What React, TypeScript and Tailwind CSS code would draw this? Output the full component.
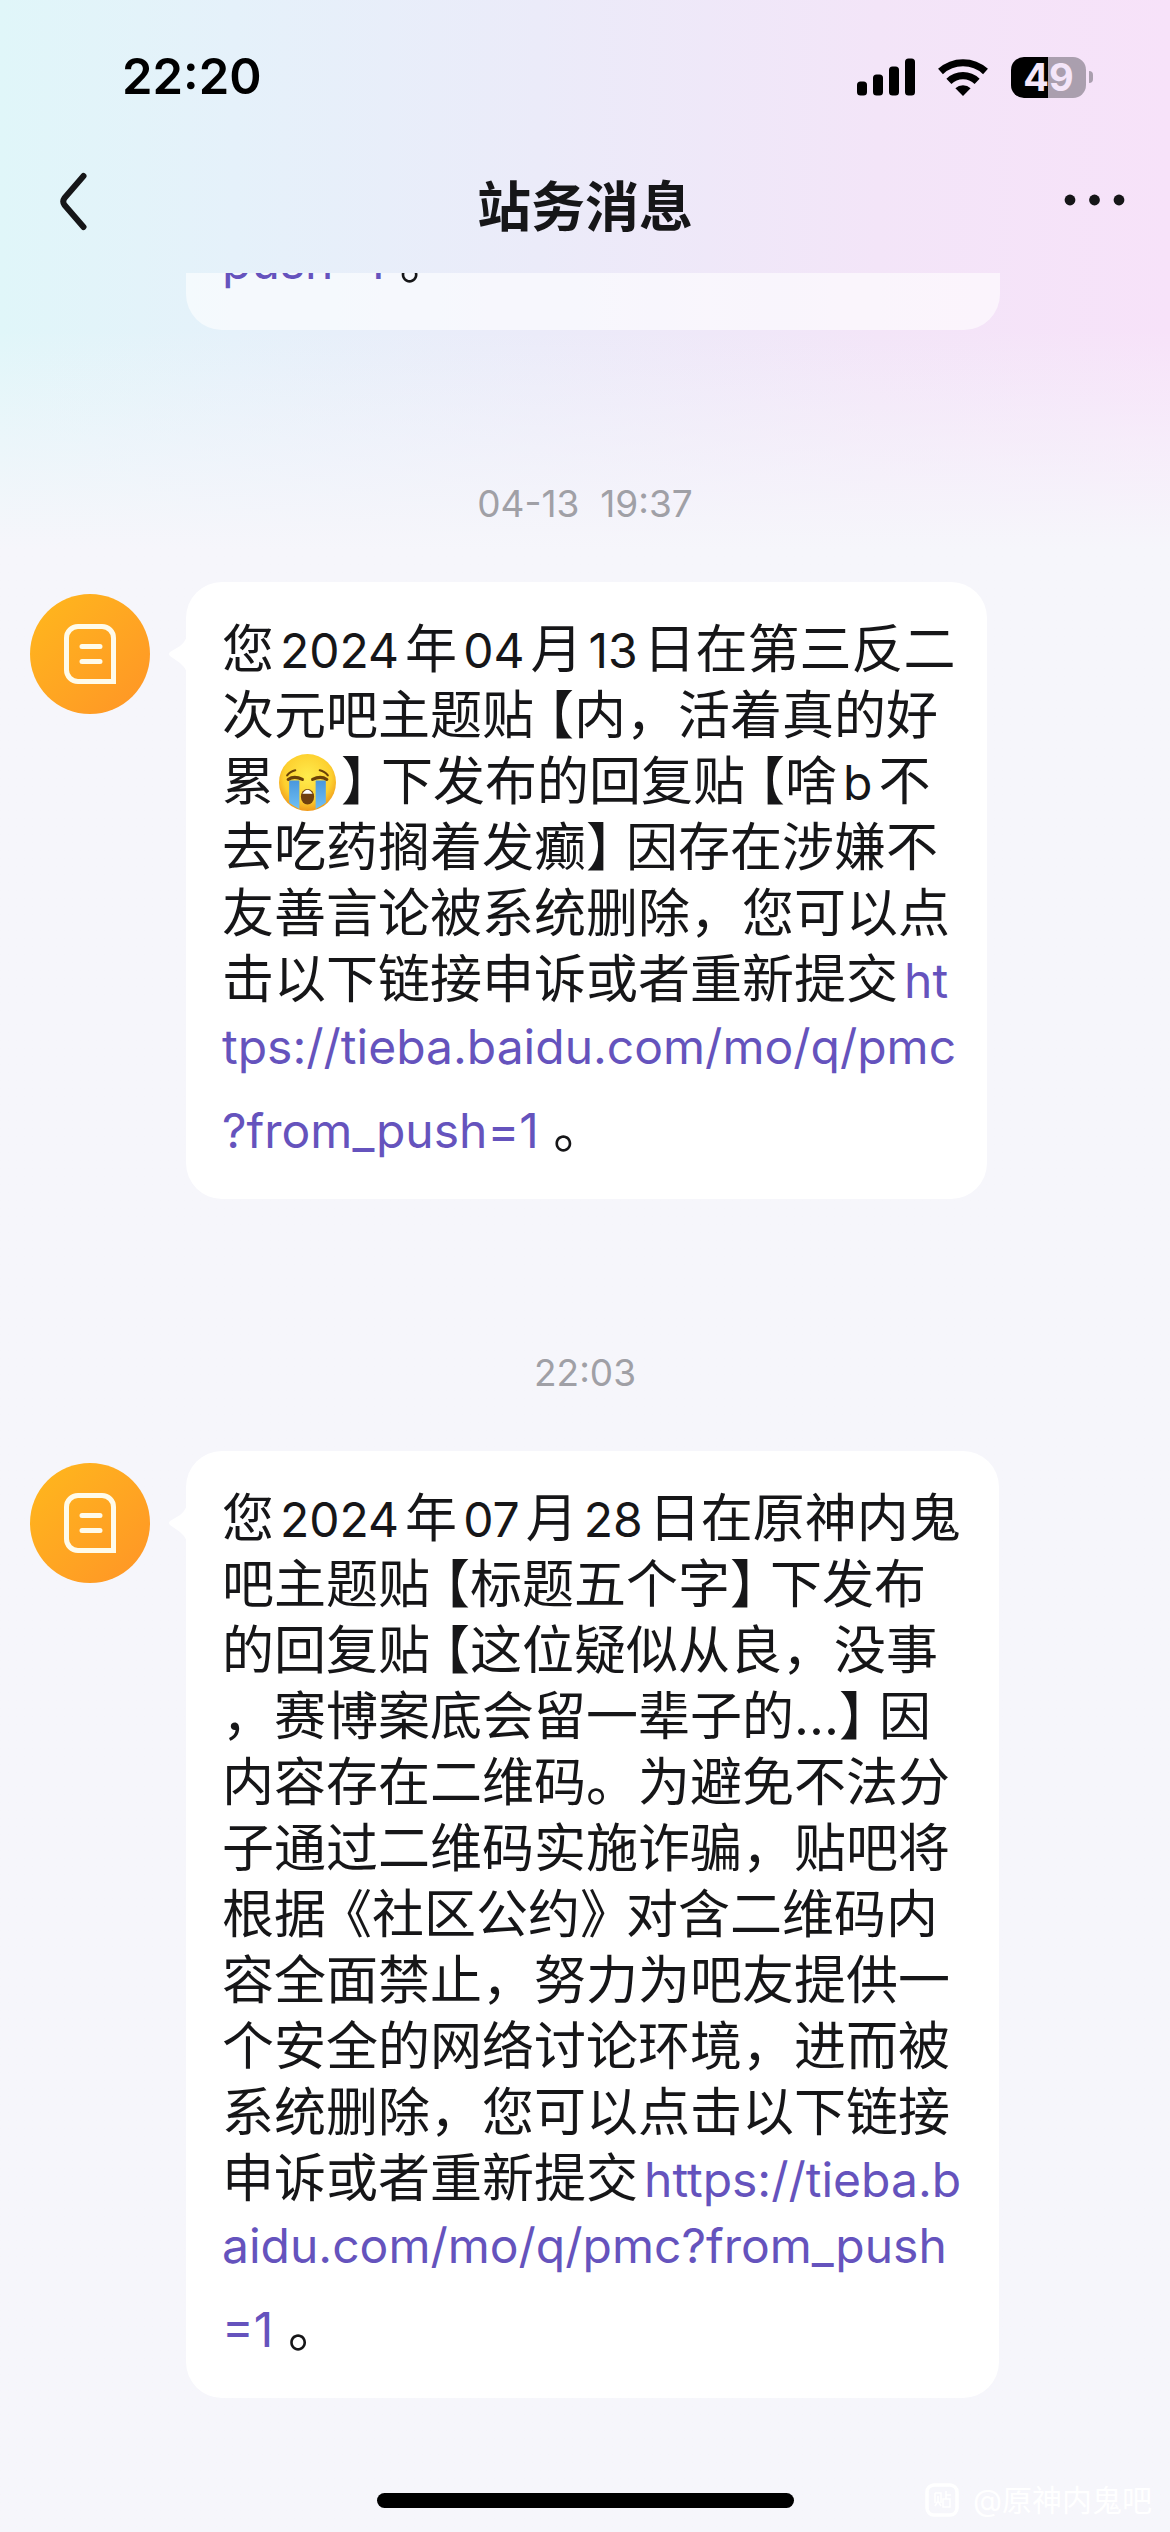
import React from 'react';

const SignalIcon = () => (
  <svg className="h-10 w-[58px]" viewBox="0 0 58 40" aria-hidden="true">
    <rect x="0" y="24.500" width="10" height="14" rx="3.500" />
    <rect x="16" y="17.500" width="10" height="21" rx="3.500" />
    <rect x="32" y="9.500" width="10" height="29" rx="3.500" />
    <rect x="48" y="1.500" width="10" height="37" rx="3.500" />
  </svg>
);

const WifiIcon = () => (
  <svg className="h-10 w-[50px]" viewBox="0 0 50 40" aria-hidden="true">
    <g fill="none" stroke="#000" strokeWidth="7.200">
      <path d="M2.500 14.500 A33.300 33.300 0 0 1 47.500 14.500" />
      <path d="M10.900 24.400 A20.300 20.300 0 0 1 39.100 24.400" />
    </g>
    <path d="M25 39 L17.400 31.200 A11 11 0 0 1 32.600 31.200 Z" />
  </svg>
);

const Battery = () => (
  <div className="flex items-center gap-[3px]">
    <div className="flex h-[41px] w-[75px] items-center justify-center rounded-[13px] bg-linear-to-r from-black from-50% to-[#aa9fae] to-50% text-[38px] leading-[41px] font-bold text-[#f4e6f9]">
      49
    </div>
    <div className="h-3 w-1 rounded-r-full bg-[#aa9fae]" />
  </div>
);

const Avatar = () => (
  <div className="mt-3 flex size-[120px] shrink-0 items-center justify-center rounded-full bg-linear-to-br from-[#ffb81c] to-[#ff9426]">
    <svg className="h-[60px] w-[52px]" viewBox="0 0 52 60" fill="none" stroke="#fffbea" aria-hidden="true">
      <path strokeWidth="5" d="M49.500 57.500 H14 A11.500 11.500 0 0 1 2.500 46 V14 A11.500 11.500 0 0 1 14 2.500 H38 A11.500 11.500 0 0 1 49.500 14 Z" />
      <path strokeWidth="5" strokeLinecap="round" d="M18 22.500 H36 M18 37.500 H36" />
    </svg>
  </div>
);

const CryingFace = () => (
  <svg className="mx-[5px] inline-block size-[57px] align-[-11px]" viewBox="0 0 56 56" role="img" aria-label="😭">
    <defs>
      <radialGradient id="face" cx="0.5" cy="0.4" r="0.6">
        <stop offset="0" stopColor="#ffec4d" />
        <stop offset="0.7" stopColor="#fdd02f" />
        <stop offset="1" stopColor="#f09a1c" />
      </radialGradient>
      <linearGradient id="tears" x1="0" y1="0" x2="0" y2="1">
        <stop offset="0" stopColor="#4a97dc" />
        <stop offset="1" stopColor="#6fc0f5" />
      </linearGradient>
    </defs>
    <circle cx="28" cy="28" r="28" fill="url(#face)" />
    <path d="M10 26 H20 V54 Q14 51 10 48 Z M36 26 H46 V48 Q42 51 36 54 Z" fill="url(#tears)" />
    <ellipse cx="28" cy="42" rx="6.500" ry="7.500" fill="#70400f" />
    <path d="M23 39 Q28 31 33 39 Z" fill="#fff" />
    <g fill="none" stroke="#6b4108" strokeLinecap="round">
      <path strokeWidth="3" d="M9 25 Q15 21 23 25 M33 25 Q41 21 47 25" />
      <path strokeWidth="2" d="M8 21 Q11 17 16 16 M40 16 Q45 17 48 21" />
    </g>
  </svg>
);

const Timestamp = ({ children }: { children: React.ReactNode }) => (
  <time className="block text-center text-[37px] leading-[48px] whitespace-pre text-[#a0a0a6]">{children}</time>
);

const Link = ({ children }: { children: React.ReactNode }) => (
  <a href="https://tieba.baidu.com/mo/q/pmc?from_push=1" className="ml-[6px] text-[48px] leading-none text-[#6553bd]">
    {children}
  </a>
);

// digits and latin letters inside the Chinese text
const Latin = ({ children }: { children: React.ReactNode }) => (
  <span className="mx-[6px] text-[48px] leading-none">{children}</span>
);

// brackets use their half-width forms
const Open = ({ gap = 'ml-[14px]', children }: { gap?: string; children: React.ReactNode }) => (
  <span className={`[font-feature-settings:'halt'] ${gap}`}>{children}</span>
);

const Close = ({ gap = 'mr-[14px]', children }: { gap?: string; children: React.ReactNode }) => (
  <span className={`[font-feature-settings:'halt'] ${gap}`}>{children}</span>
);

const FullStop = () => <span className="leading-[102px]"> 。</span>;

const Message = ({ width, children }: { width: string; children: React.ReactNode }) => (
  <div className="flex items-start gap-9 px-[30px]">
    <Avatar />
    <div className={`relative rounded-[36px] bg-white ${width}`}>
      <svg className="absolute top-[54px] -left-[18px] h-9 w-[19px]" viewBox="0 0 19 36" aria-hidden="true">
        <path d="M19 0 Q17 6 12 10 L2 16 Q0 18 2 20 L12 27 Q17 31 19 36 Z" fill="#fff" />
      </svg>
      <p className="pt-[35px] pb-[18px] pl-9 text-[52px] leading-[66px] whitespace-nowrap text-[#161618]">{children}</p>
    </div>
  </div>
);

const App = () => {
  return (
    <div className="flex min-h-screen flex-col bg-[#f6f6fb] font-['Inter','Noto_Sans_CJK_SC',sans-serif]">
      <div className="flex grow flex-col bg-[linear-gradient(to_right,#e0f6f9,#e5f1fa_20%,#ebebf9_46%,#f3e5f8_75%,#f7e2f9)]">
        <div className="flex grow flex-col bg-linear-to-b from-[#f6f6fb]/0 from-[330px] to-[#f6f6fb] to-[550px]">
          <header className="h-[273px]">
            <div className="flex items-center justify-between pt-[53px] pr-[77px] pl-[122px]">
              <span className="text-[49px] leading-[48px] font-semibold">22:20</span>
              <div className="flex items-center gap-[23px]">
                <SignalIcon />
                <WifiIcon />
                <Battery />
              </div>
            </div>
            <div className="flex items-center justify-between px-[45px] pt-[57px]">
              <button type="button" aria-label="返回" className="w-[61px]">
                <svg className="ml-[11px] h-[60px] w-[34px]" viewBox="0 0 34 60" fill="none" stroke="#161618" strokeWidth="6" strokeLinecap="round" strokeLinejoin="round" aria-hidden="true">
                  <path d="M27.500 5 L8.500 27 Q6 30.500 8.500 34 L27.500 56" />
                </svg>
              </button>
              <h1 className="pt-[14px] text-[54px] leading-[72px] font-semibold text-[#161618]">站务消息</h1>
              <button type="button" aria-label="更多">
                <svg className="h-[60px] w-[61px]" viewBox="0 0 61 60" fill="#161618" aria-hidden="true">
                  <circle cx="6" cy="29" r="5.400" />
                  <circle cx="30.500" cy="29" r="5.400" />
                  <circle cx="55" cy="29" r="5.400" />
                </svg>
              </button>
            </div>
          </header>

          <main className="grow">
            {/* tail of the previous message, scrolled under the header */}
            <div className="ml-[186px] flex h-[57px] w-[814px] flex-col justify-end overflow-hidden rounded-b-[36px] bg-white/60">
              <p className="shrink-0 pb-[18px] pl-[30px] text-[52px] leading-[66px] text-[#161618]">
                <Link>push=1</Link>
                <FullStop />
              </p>
            </div>

            <div className="pt-[150px] pb-[54px]">
              <Timestamp>{'04-13  19:37'}</Timestamp>
            </div>
            <Message width="w-[801px]">
              您<Latin>2024</Latin>年<Latin>04</Latin>月<Latin>13</Latin>日在第三反二<br />
              次元吧主题贴<Open>【</Open>内，活着真的好<br />
              累<CryingFace /><Close>】</Close>下发布的回复贴<Open>【</Open>啥<Latin>b</Latin>不<br />
              去吃药搁着发癫<Close>】</Close>因存在涉嫌不<br />
              友善言论被系统删除，您可以点<br />
              击以下链接申诉或者重新提交<Link>ht<br />
              tps://tieba.baidu.com/mo/q/pmc<br />
              ?from_push=1</Link><FullStop />
            </Message>

            <div className="pt-[150px] pb-[54px]">
              <Timestamp>22:03</Timestamp>
            </div>
            <Message width="w-[813px]">
              您<Latin>2024</Latin>年<Latin>07</Latin>月<Latin>28</Latin>日在原神内鬼<br />
              吧主题贴<Open>【</Open>标题五个字<Close>】</Close>下发布<br />
              的回复贴<Open>【</Open>这位疑似从良，没事<br />
              ，赛博案底会留一辈子的...<Close>】</Close>因<br />
              内容存在二维码。为避免不法分<br />
              子通过二维码实施诈骗，贴吧将<br />
              根据<Open gap="ml-5">《</Open>社区公约<Close gap="mr-5">》</Close>对含二维码内<br />
              容全面禁止，努力为吧友提供一<br />
              个安全的网络讨论环境，进而被<br />
              系统删除，您可以点击以下链接<br />
              申诉或者重新提交<Link>https://tieba.b<br />
              aidu.com/mo/q/pmc?from_push<br />
              =1</Link><FullStop />
            </Message>
          </main>

          <footer className="grid grid-cols-[1fr_417px_1fr] items-center pb-[10px]">
            <div className="col-start-2 h-[15px] rounded-full bg-black" />
            <div className="flex items-center justify-end gap-[14px] pr-[18px] text-[30px] leading-[44px] text-white">
              <svg className="size-[34px]" viewBox="0 0 34 34" fill="none" stroke="#fff" aria-hidden="true">
                <rect x="2" y="2" width="30" height="30" rx="7" strokeWidth="3.500" />
                <path strokeWidth="1.500" d="M10 10 V20 M10 10 H16 V20 M13 13 V18 L10 23 M13 18 L16 23 M21 8 V16 M21 12 H26 M18 16 H25 V24 H18 Z" />
              </svg>
              @原神内鬼吧
            </div>
          </footer>
        </div>
      </div>
    </div>
  );
};

export default App;
